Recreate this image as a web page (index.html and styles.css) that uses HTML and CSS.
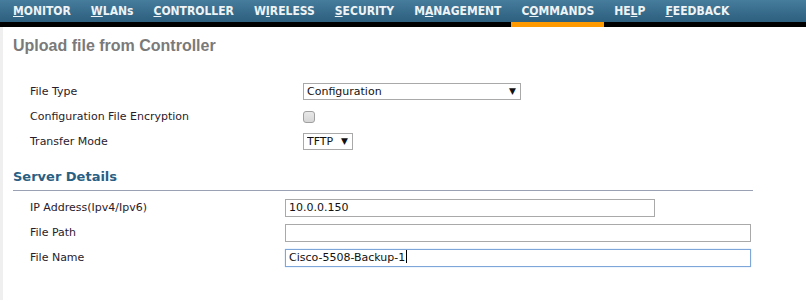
FILE: index.html
```html
<!DOCTYPE html>
<html>
<head>
<meta charset="utf-8">
<link rel="stylesheet" href="styles.css">
</head>
<body>
<nav class="topnav">
  <a class="nav-item"><u>M</u>ONITOR</a>
  <a class="nav-item"><u>W</u>LANs</a>
  <a class="nav-item"><u>C</u>ONTROLLER</a>
  <a class="nav-item">W<u>I</u>RELESS</a>
  <a class="nav-item"><u>S</u>ECURITY</a>
  <a class="nav-item">M<u>A</u>NAGEMENT</a>
  <a class="nav-item active">C<u>O</u>MMANDS</a>
  <a class="nav-item">HE<u>L</u>P</a>
  <a class="nav-item"><u>F</u>EEDBACK</a>
</nav>
<main class="content">
  <h1 class="page-title">Upload file from Controller</h1>
  <div class="form form-top">
    <div class="row">
      <span class="label">File Type</span>
      <span class="select-wrap select-wide"><select class="select"><option>Configuration</option></select></span>
    </div>
    <div class="row">
      <span class="label">Configuration File Encryption</span>
      <input type="checkbox" class="check">
    </div>
    <div class="row">
      <span class="label">Transfer Mode</span>
      <span class="select-wrap select-narrow"><select class="select"><option>TFTP</option></select></span>
    </div>
  </div>
  <h2 class="section-title">Server Details</h2>
  <div class="form form-bottom">
    <div class="row">
      <span class="label">IP Address(Ipv4/Ipv6)</span>
      <input type="text" class="text-input input-mid" value="10.0.0.150">
    </div>
    <div class="row">
      <span class="label">File Path</span>
      <input type="text" class="text-input input-long" value="">
    </div>
    <div class="row">
      <span class="label">File Name</span>
      <span class="text-input input-long focused">Cisco-5508-Backup-1<span class="caret"></span></span>
    </div>
  </div>
</main>
</body>
</html>
```
FILE: styles.css
```css
html, body {
  margin: 0;
  padding: 0;
  background: #fff;
}
body {
  font-family: "DejaVu Sans", Verdana, sans-serif;
  font-size: 11px;
  color: #222;
}
.topnav {
  display: flex;
  height: 22px;
  padding-left: 3px;
  background: linear-gradient(#467c9c, #2d5f7e);
  border-bottom: 5px solid #000;
}
.nav-item {
  position: relative;
  padding: 0 10px;
  line-height: 22px;
  font-family: "DejaVu Sans Condensed", "DejaVu Sans", sans-serif;
  font-weight: bold;
  font-size: 12px;
  color: #eef3f6;
  white-space: nowrap;
}
.nav-item.active::after {
  content: "";
  position: absolute;
  left: 0;
  right: 0;
  top: 22px;
  height: 5px;
  background: #ff9900;
}
.content {
  border-left: 3px solid #efefef;
  padding: 9px 0 30px 10px;
  min-height: 240px;
  box-sizing: border-box;
}
.page-title {
  margin: 0;
  font-family: "Liberation Sans", Arial, sans-serif;
  font-weight: bold;
  font-size: 16px;
  line-height: 20px;
  color: #7a7a7a;
}
.form {
  width: 740px;
}
.form-top {
  margin-top: 23px;
}
.row {
  display: grid;
  align-items: center;
  height: 25px;
  padding-left: 17px;
}
.form-top .row {
  grid-template-columns: 273px auto;
}
.form-bottom .row {
  grid-template-columns: 255px auto;
}
.label {
  color: #2a1a2a;
}
.select-wrap {
  position: relative;
  display: inline-block;
  height: 17px;
  justify-self: start;
}
.select-wrap::after {
  content: "▼";
  position: absolute;
  right: 5px;
  top: 2px;
  font-size: 9px;
  line-height: 13px;
  color: #111;
  pointer-events: none;
}
.select-wide { width: 218px; }
.select-narrow { width: 50px; }
.select {
  appearance: none;
  -webkit-appearance: none;
  width: 100%;
  height: 17px;
  margin: 0;
  padding: 0 0 0 3px;
  border: 1px solid #a9a9a9;
  border-radius: 0;
  background: #fff;
  font-family: inherit;
  font-size: 11px;
  color: #111;
  box-sizing: border-box;
}
.check {
  appearance: none;
  -webkit-appearance: none;
  width: 12px;
  height: 12px;
  margin: 0;
  border: 1px solid #a0a0a0;
  border-radius: 3px;
  background: linear-gradient(#e8e8e8, #d6d6d6);
  box-sizing: border-box;
}
.section-title {
  margin: 13px 0 0 0;
  width: 740px;
  height: 24px;
  box-sizing: border-box;
  border-bottom: 1px solid #9ba1b5;
  font-family: "DejaVu Sans", Verdana, sans-serif;
  font-weight: bold;
  font-size: 13px;
  line-height: 20px;
  color: #2a5f84;
}
.form-bottom {
  margin-top: 4px;
}
.text-input {
  display: inline-block;
  height: 18px;
  margin: 0;
  padding: 0 0 0 3px;
  border: 1px solid #a9a9a9;
  border-radius: 0;
  background: #fff;
  font-family: inherit;
  font-size: 11px;
  line-height: 16px;
  color: #111;
  box-sizing: border-box;
  justify-self: start;
  outline: none;
}
.input-mid { width: 370px; }
.input-long { width: 466px; }
.text-input.focused {
  border-color: #7fa6d8;
  box-shadow: 0 0 1px #9fc0ea;
}
.caret {
  display: inline-block;
  width: 1px;
  height: 13px;
  margin-left: 1px;
  vertical-align: -2px;
  background: #000;
}
```
